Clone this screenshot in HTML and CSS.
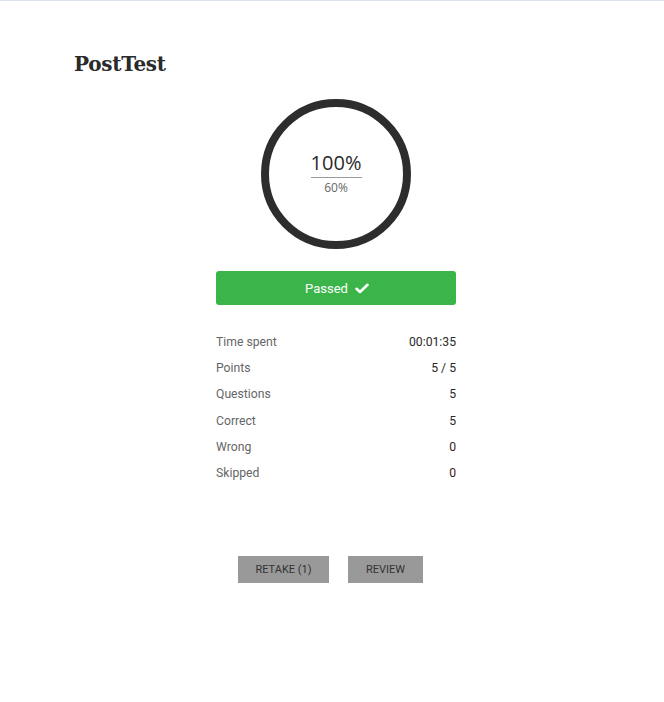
FILE: index.html
```html
<!DOCTYPE html>
<html>
<head>
<meta charset="utf-8">
<link rel="stylesheet" href="styles.css">
</head>
<body>
<div class="page">
  <h1 class="title">PostTest</h1>
  <div class="result">
    <div class="ring">
      <div class="score">100%</div>
      <div class="pass-mark">60%</div>
    </div>
    <div class="status">
      <span>Passed</span>
      <svg class="check" viewBox="0 0 14 11" width="14" height="11"><path d="M1.5 5.8 L5 9 L12.5 1.8" fill="none" stroke="#fff" stroke-width="2.6" stroke-linecap="round" stroke-linejoin="round"/></svg>
    </div>
    <div class="stats">
      <div class="row"><span class="label">Time spent</span><span class="value">00:01:35</span></div>
      <div class="row"><span class="label">Points</span><span class="value">5 / 5</span></div>
      <div class="row"><span class="label">Questions</span><span class="value">5</span></div>
      <div class="row"><span class="label">Correct</span><span class="value">5</span></div>
      <div class="row"><span class="label">Wrong</span><span class="value bad">0</span></div>
      <div class="row"><span class="label">Skipped</span><span class="value bad">0</span></div>
    </div>
    <div class="actions">
      <button class="btn retake">RETAKE (1)</button>
      <button class="btn review">REVIEW</button>
    </div>
  </div>
</div>
</body>
</html>
```
FILE: styles.css
```css
html, body {
  margin: 0;
  padding: 0;
  background: #fff;
}
body {
  border-top: 1px solid #dce2f2;
  font-family: Roboto, "Liberation Sans", sans-serif;
  color: #333;
}
.page {
  padding: 48px 66px 0 74px;
}
.title {
  margin: 0;
  font-family: "DejaVu Serif", "Liberation Serif", serif;
  font-weight: bold;
  font-size: 20px;
  line-height: 30px;
  color: #2a2a2a;
  letter-spacing: -0.3px;
}
.result {
  display: flex;
  flex-direction: column;
  align-items: center;
  margin-top: 20px;
}
.ring {
  width: 150px;
  height: 150px;
  box-sizing: border-box;
  border: 8px solid #2d2d2d;
  border-radius: 50%;
  display: flex;
  flex-direction: column;
  align-items: center;
  justify-content: center;
  padding-bottom: 2px;
}
.score {
  font-family: "Open Sans", sans-serif;
  font-size: 20px;
  line-height: 26px;
  color: #2a2a2a;
  width: 51px;
  text-align: center;
  border-bottom: 1px solid #999;
  padding-bottom: 1px;
}
.pass-mark {
  font-family: "Open Sans", sans-serif;
  font-size: 12px;
  line-height: 18px;
  color: #666;
  margin-top: 1px;
}
.status {
  margin-top: 22px;
  width: 240px;
  height: 34px;
  background: #3bb54a;
  border-radius: 3px;
  display: flex;
  align-items: center;
  justify-content: center;
  gap: 7px;
  color: #fff;
  font-size: 13px;
  padding-left: 2px;
  box-sizing: border-box;
}
.check {
  display: block;
}
.stats {
  margin-top: 24px;
  width: 240px;
  display: flex;
  flex-direction: column;
}
.row {
  height: 26.2px;
  display: flex;
  align-items: center;
  justify-content: space-between;
  font-size: 12.2px;
}
.label {
  color: #666;
}
.value {
  color: #2a2a2a;
}
.value.bad {
  color: #3b1c1c;
}
.actions {
  margin-top: 70px;
  margin-right: 11px;
  display: flex;
  gap: 19px;
}
.btn {
  height: 27px;
  border: none;
  border-radius: 0;
  background: #999;
  color: #333;
  font-family: Roboto, "Liberation Sans", sans-serif;
  font-size: 11px;
  padding: 0;
  cursor: pointer;
}
.retake {
  width: 91px;
}
.review {
  width: 75px;
}
```
